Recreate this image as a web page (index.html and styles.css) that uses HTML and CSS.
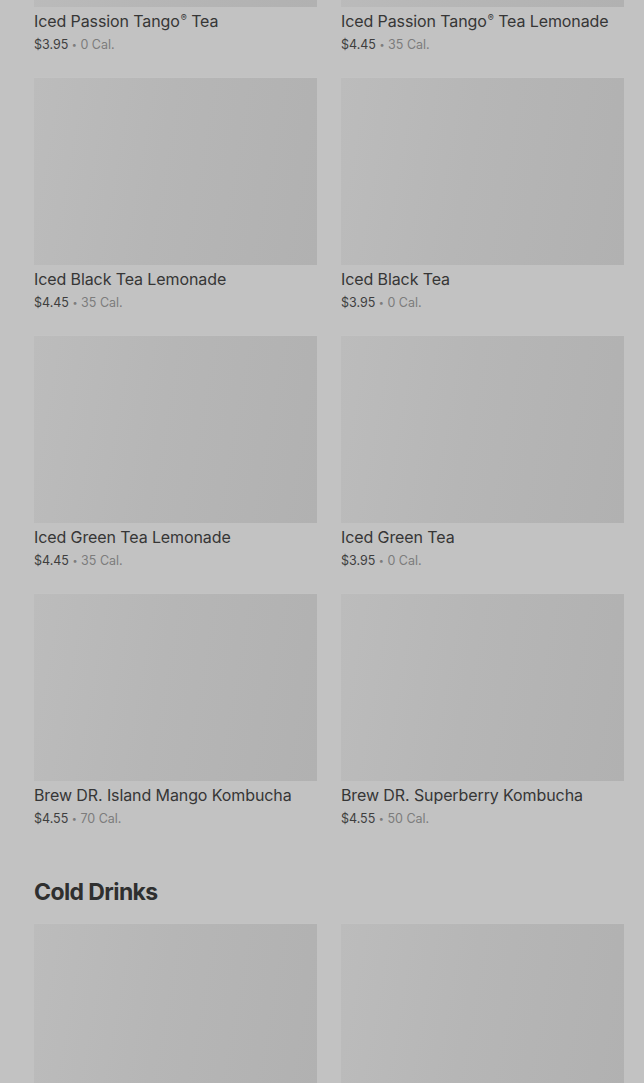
FILE: index.html
```html
<!DOCTYPE html>
<html lang="en">
<head>
<meta charset="utf-8">
<title>Menu</title>
<link rel="stylesheet" href="styles.css">
</head>
<body>
<main class="page">
  <section class="grid grid-first">
    <article class="card"><div class="thumb"></div><div class="caption"><h3 class="name">Iced Passion Tango<sup class="reg">®</sup> Tea</h3><p class="meta"><span class="price">$3.95</span> <span class="dot">•</span> 0 Cal.</p></div></article>
    <article class="card"><div class="thumb"></div><div class="caption"><h3 class="name">Iced Passion Tango<sup class="reg">®</sup> Tea Lemonade</h3><p class="meta"><span class="price">$4.45</span> <span class="dot">•</span> 35 Cal.</p></div></article>
    <article class="card"><div class="thumb"></div><div class="caption"><h3 class="name">Iced Black Tea Lemonade</h3><p class="meta"><span class="price">$4.45</span> <span class="dot">•</span> 35 Cal.</p></div></article>
    <article class="card"><div class="thumb"></div><div class="caption"><h3 class="name">Iced Black Tea</h3><p class="meta"><span class="price">$3.95</span> <span class="dot">•</span> 0 Cal.</p></div></article>
    <article class="card"><div class="thumb"></div><div class="caption"><h3 class="name">Iced Green Tea Lemonade</h3><p class="meta"><span class="price">$4.45</span> <span class="dot">•</span> 35 Cal.</p></div></article>
    <article class="card"><div class="thumb"></div><div class="caption"><h3 class="name">Iced Green Tea</h3><p class="meta"><span class="price">$3.95</span> <span class="dot">•</span> 0 Cal.</p></div></article>
    <article class="card"><div class="thumb"></div><div class="caption"><h3 class="name">Brew DR. Island Mango Kombucha</h3><p class="meta"><span class="price">$4.55</span> <span class="dot">•</span> 70 Cal.</p></div></article>
    <article class="card"><div class="thumb"></div><div class="caption"><h3 class="name">Brew DR. Superberry Kombucha</h3><p class="meta"><span class="price">$4.55</span> <span class="dot">•</span> 50 Cal.</p></div></article>
  </section>
  <h2 class="section-title">Cold Drinks</h2>
  <section class="grid">
    <article class="card"><div class="thumb"></div></article>
    <article class="card"><div class="thumb"></div></article>
  </section>
</main>
</body>
</html>
```
FILE: styles.css
```css
html, body {
  margin: 0;
  padding: 0;
  background: #c2c2c2;
  height: 100%;
  overflow: hidden;
}
body {
  font-family: "Inter", "Roboto", "Liberation Sans", sans-serif;
  color: #343434;
}
.page {
  padding: 0 20px 0 34px;
}
.grid {
  display: grid;
  grid-template-columns: 283px 283px;
  column-gap: 24px;
  row-gap: 22px;
}
.grid-first {
  margin-top: -181px;
}
.thumb {
  height: 188px;
  background: linear-gradient(100deg, #bcbcbc 0%, #b6b6b6 45%, #b1b1b1 100%);
  box-shadow: inset 0 1px 0 #c3c3c3;
}
.caption {
  padding-top: 4px;
}
.name {
  margin: 0;
  height: 20px;
  font-size: 16px;
  line-height: 20px;
  font-weight: 400;
  color: #363636;
  letter-spacing: -0.1px;
  white-space: nowrap;
}
.reg {
  font-size: 9px;
  line-height: 0;
  vertical-align: 6px;
  margin-left: 1px;
}
.meta {
  margin: 4px 0 0;
  height: 20px;
  font-size: 12.5px;
  line-height: 20px;
  color: #7c7c7c;
}
.price {
  color: #3e3e3e;
}
.dot {
  font-size: 9px;
  vertical-align: 1px;
}
.section-title {
  margin: 49px 0 17px;
  font-size: 23px;
  line-height: 28px;
  font-weight: 700;
  letter-spacing: -0.6px;
  color: #2f2f2f;
}
```
